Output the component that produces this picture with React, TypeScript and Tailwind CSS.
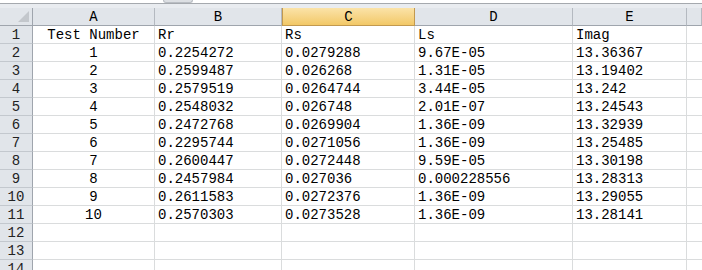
import React from "react";

const rows: string[][] = [
  ["Test Number", "Rr", "Rs", "Ls", "Imag"],
  ["1", "0.2254272", "0.0279288", "9.67E-05", "13.36367"],
  ["2", "0.2599487", "0.026268", "1.31E-05", "13.19402"],
  ["3", "0.2579519", "0.0264744", "3.44E-05", "13.242"],
  ["4", "0.2548032", "0.026748", "2.01E-07", "13.24543"],
  ["5", "0.2472768", "0.0269904", "1.36E-09", "13.32939"],
  ["6", "0.2295744", "0.0271056", "1.36E-09", "13.25485"],
  ["7", "0.2600447", "0.0272448", "9.59E-05", "13.30198"],
  ["8", "0.2457984", "0.027036", "0.000228556", "13.28313"],
  ["9", "0.2611583", "0.0272376", "1.36E-09", "13.29055"],
  ["10", "0.2570303", "0.0273528", "1.36E-09", "13.28141"],
  ["", "", "", "", ""],
  ["", "", "", "", ""],
  ["", "", "", "", ""],
];

const cols = ["A", "B", "C", "D", "E", ""];
const grid = "grid grid-cols-[33px_122px_127px_133px_158px_114px_1fr]";
const font = { fontFamily: '"Liberation Mono", "DejaVu Sans Mono", monospace' };

export default function App() {
  return (
    <div className="w-[702px] h-[270px] overflow-hidden bg-white text-[14px] text-black" style={font}>
      <div className="relative h-[3px] bg-white">
        <div className="absolute left-[163px] top-0 w-[30px] h-[3px] rounded-b-[3px] bg-[#dcdfe3] border-x border-b border-[#b9bdc3]" />
      </div>
      <div className="h-px bg-[#a5a9ae]" />
      <div className="h-[4px] bg-[#e9ecf0]" />
      <div className={`${grid} h-[18px]`}>
        <div className="relative bg-[#e1e5ea] border-r border-b border-[#9fa5ad]">
          <div className="absolute right-[3px] bottom-[3px] w-0 h-0 border-l-[11px] border-l-transparent border-b-[11px] border-b-[#c3c7cc]" />
        </div>
        {cols.map((c, i) =>
          c === "C" ? (
            <div
              key={i}
              className="flex items-center justify-center leading-none bg-gradient-to-b from-[#fbe3a8] to-[#f2c866] border-r border-b border-[#c2994f] border-l border-l-[#c2994f]"
            >
              {c}
            </div>
          ) : (
            <div
              key={i}
              className="flex items-center justify-center leading-none bg-[#e1e5ea] border-r border-r-[#b4b9c0] border-b border-b-[#9fa5ad]"
            >
              {c}
            </div>
          )
        )}
      </div>
      {rows.map((r, ri) => (
        <div key={ri} className={`${grid} h-[18px]`}>
          <div className="flex items-center justify-center leading-none bg-[#e1e5ea] border-r border-r-[#9fa5ad] border-b border-b-[#c3c8ce] text-[#222]">
            {ri + 1}
          </div>
          {r.map((v, ci) => (
            <div
              key={ci}
              className={`flex items-center leading-none whitespace-nowrap overflow-visible border-r border-b border-[#dadcdd] ${
                ci === 0 ? "justify-center" : "pl-[3px]"
              }`}
            >
              {v}
            </div>
          ))}
          <div className="border-b border-[#dadcdd]" />
        </div>
      ))}
    </div>
  );
}
